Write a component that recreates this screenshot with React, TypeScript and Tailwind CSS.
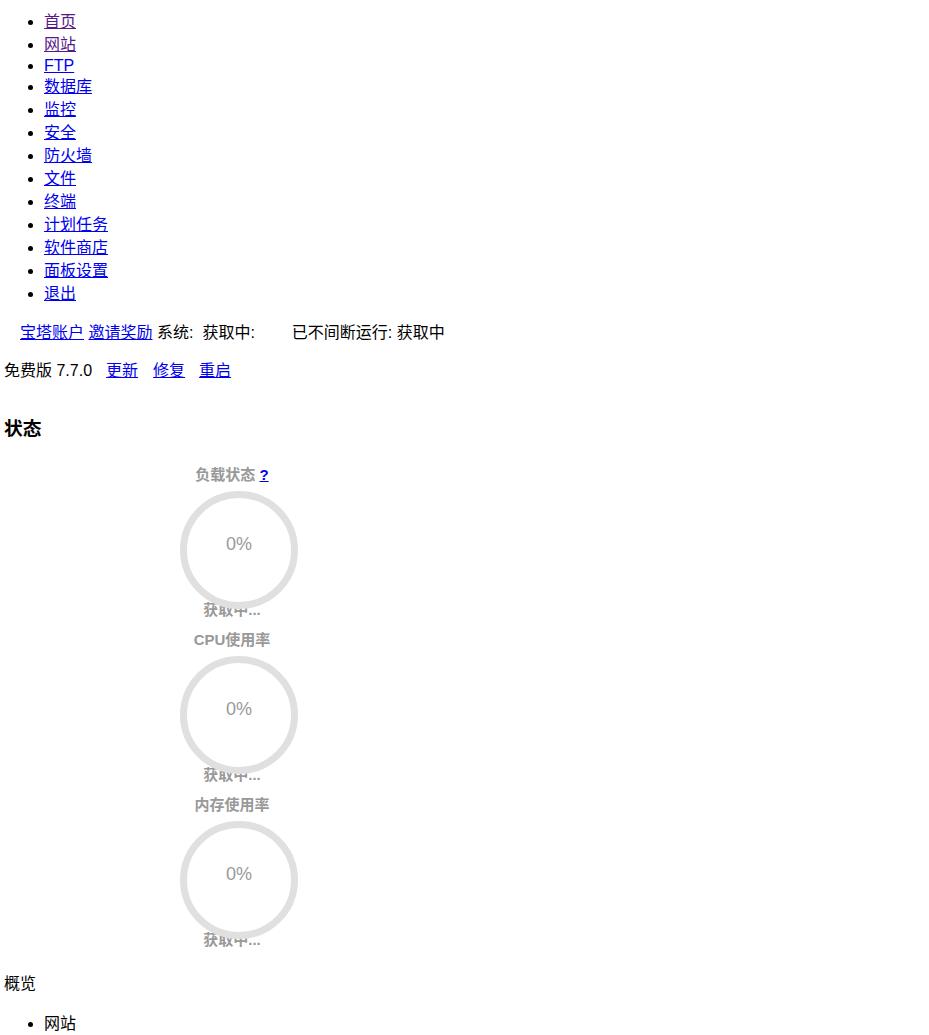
import React from "react";

const nav = [
  { label: "首页", visited: true },
  { label: "网站", visited: true },
  { label: "FTP", latin: true },
  { label: "数据库" },
  { label: "监控" },
  { label: "安全" },
  { label: "防火墙" },
  { label: "文件" },
  { label: "终端" },
  { label: "计划任务" },
  { label: "软件商店" },
  { label: "面板设置" },
  { label: "退出" },
];

const gauges = [
  { title: "负载状态", help: true },
  { title: "CPU使用率" },
  { title: "内存使用率" },
];

function Gauge({ title, help }: { title: string; help?: boolean }) {
  return (
    <div className="w-[456px] text-center text-[15px] font-bold text-[#999]">
      <div className="leading-[20px]">
        {title}{" "}
        {help && (
          <a href="#" className="text-[#0000ee] underline">
            ?
          </a>
        )}
      </div>
      <div className="relative ml-[176px] mt-[6px] flex h-[118px] w-[118px] justify-center rounded-full border-[7px] border-[#e0e0e0]">
        <span className="mt-[34px] text-[18px] font-normal leading-[24px] text-[#999]">0%</span>
      </div>
      <div className="-mt-[9px] leading-[20px]">获取中...</div>
    </div>
  );
}

export default function App() {
  return (
    <div className="px-[4px] text-[16px] leading-[normal] text-black font-['Liberation_Sans','Noto_Sans_CJK_SC',sans-serif]">
      <ul className="mt-[10px] mb-[14px] list-disc pl-10">
        {nav.map((item) => (
          <li key={item.label} className={item.latin ? "leading-[19px]" : "leading-[23px]"}>
            <a href="#" className={item.visited ? "text-[#551a8b] underline" : "text-[#0000ee] underline"}>
              {item.label}
            </a>
          </li>
        ))}
      </ul>

      <div>
        <a href="#" className="ml-[16px] text-[#0000ee] underline">宝塔账户</a>{" "}
        <a href="#" className="text-[#0000ee] underline">邀请奖励</a>{" "}
        <span>系统:</span>
        <span className="ml-[9px]">获取中:</span>
        <span className="ml-[37px]">已不间断运行: 获取中</span>
      </div>

      <div className="mt-[14px]">
        <span>免费版 7.7.0</span>
        <a href="#" className="ml-[14px] text-[#0000ee] underline">更新</a>
        <a href="#" className="ml-[15px] text-[#0000ee] underline">修复</a>
        <a href="#" className="ml-[14px] text-[#0000ee] underline">重启</a>
      </div>

      <h3 className="mt-[32px] text-[18.72px] font-bold">状态</h3>

      <div className="mt-[25px] flex flex-col gap-[10px]">
        {gauges.map((g) => (
          <Gauge key={g.title} title={g.title} help={g.help} />
        ))}
      </div>

      <div className="mt-[20px]">概览</div>
      <ul className="my-4 list-disc pl-10">
        <li>网站</li>
      </ul>
    </div>
  );
}
